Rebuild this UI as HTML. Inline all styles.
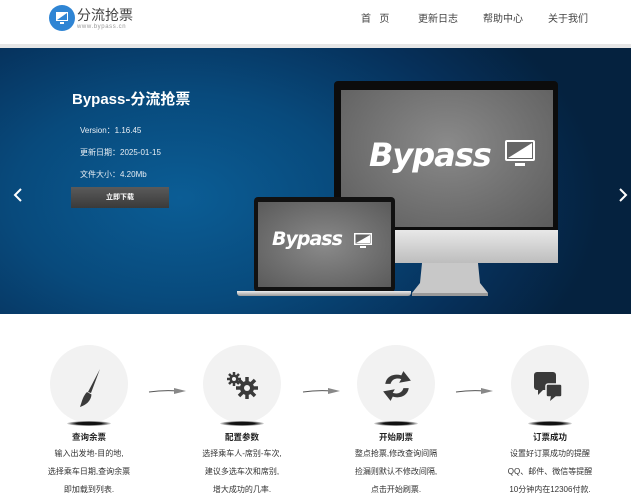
<!DOCTYPE html>
<html><head><meta charset="utf-8"><style>
*{margin:0;padding:0;box-sizing:border-box}
body{width:631px;height:500px;overflow:hidden;background:#fff;font-family:"Liberation Sans","Noto Sans CJK SC",sans-serif;position:relative}
.hdr{position:absolute;left:0;top:0;width:631px;height:44px;background:#fff}
.strip{position:absolute;left:0;top:44px;width:631px;height:5px;background:#e6e6e6}
.nav{position:absolute;top:10px;font-size:10px;color:#444}
.banner{position:absolute;left:0;top:48px;width:631px;height:266px;background:radial-gradient(ellipse 420px 260px at 180px 150px,#0b5d95 0%,#084a7c 40%,#06305a 75%,#05223f 100%)}
.abs{position:absolute}
.t{color:#e8eef4;font-size:8px}
.circ{position:absolute;width:78px;height:78px;border-radius:50%;background:#f2f2f2}
.sh{position:absolute;width:44px;height:5px;border-radius:50%;background:radial-gradient(ellipse,#111 40%,rgba(0,0,0,0) 75%)}
.ft{position:absolute;width:150px;text-align:center;font-size:8px;color:#333;line-height:18px}
.ft b{font-size:8.5px;color:#222;display:block;margin-bottom:-1px}
.arr{position:absolute;top:387px}
.bp{font-family:"DejaVu Sans",sans-serif;font-style:italic;font-weight:bold;color:#fff;letter-spacing:-1px}
</style></head><body>
<div class="hdr">
 <div class="abs" style="left:49px;top:5px;width:26px;height:26px;border-radius:50%;background:#2f85d4"></div>
 <svg class="abs" style="left:55px;top:11px" width="14" height="14" viewBox="0 0 14 14"><rect x="1" y="1" width="12" height="9" fill="#fff"/><path d="M2 9 L12 2 L12 9Z" fill="#2f85d4"/><rect x="5" y="11" width="4" height="2" fill="#fff"/></svg>
 <div class="abs" style="left:77px;top:5px;font-size:14px;color:#444">分流抢票</div>
 <div class="abs" style="left:77px;top:24px;font-size:6px;color:#999;letter-spacing:0.6px">www.bypass.cn</div>
 <div class="nav" style="left:361px">首&nbsp;&nbsp;&nbsp;页</div>
 <div class="nav" style="left:418px">更新日志</div>
 <div class="nav" style="left:483px">帮助中心</div>
 <div class="nav" style="left:548px">关于我们</div>
</div>
<div class="strip"></div>
<div class="banner"></div>
<div class="abs" style="left:72px;top:88px;color:#fff;font-weight:bold;font-size:15px">Bypass-分流抢票</div>
<div class="abs t" style="left:80px;top:125px">Version：1.16.45</div>
<div class="abs t" style="left:80px;top:147px">更新日期：2025-01-15</div>
<div class="abs t" style="left:80px;top:169px">文件大小：4.20Mb</div>
<div class="abs" style="left:71px;top:187px;width:98px;height:21px;background:linear-gradient(#5a5a5a,#3a3a3a);color:#fff;font-size:7px;font-weight:bold;text-align:center;line-height:21px">立即下载</div>
<svg class="abs" style="left:13px;top:187px" width="10" height="16"><path d="M8 2 L2 8 L8 14" stroke="#fff" stroke-width="2" fill="none"/></svg>
<svg class="abs" style="left:618px;top:187px" width="10" height="16"><path d="M2 2 L8 8 L2 14" stroke="#fff" stroke-width="2" fill="none"/></svg>
<div class="abs" style="left:334px;top:81px;width:224px;height:150px;background:#0c0c0c;border-radius:4px 4px 0 0"></div>
<div class="abs" style="left:341px;top:90px;width:212px;height:137px;background:radial-gradient(ellipse at 50% 40%,#8a8a8a,#5c5c5c)"></div>
<div class="abs" style="left:334px;top:230px;width:224px;height:33px;background:linear-gradient(#e8e8e8,#bdbdbd)"></div>
<svg class="abs" style="left:410px;top:263px" width="80" height="34"><path d="M12 0 L68 0 L70 20 L78 30 L78 33 L2 33 L2 30 L10 20Z" fill="#c8c8c8"/><path d="M2 30 L78 30 L78 33 L2 33Z" fill="#999"/></svg>
<div class="abs bp" style="left:369px;top:136px;font-size:32px">Bypass</div>
<svg class="abs" style="left:503px;top:138px" width="34" height="32"><rect x="2" y="2" width="30" height="21" fill="#fff" rx="2"/><rect x="4" y="4" width="26" height="17" fill="#666"/><path d="M5 20 L29 5 L29 20Z" fill="#fff"/><rect x="12" y="25" width="10" height="3" fill="#fff"/></svg>
<div class="abs" style="left:254px;top:197px;width:141px;height:95px;background:#111;border-radius:4px"></div>
<div class="abs" style="left:258px;top:202px;width:133px;height:85px;background:radial-gradient(ellipse,#8a8a8a,#5a5a5a)"></div>
<div class="abs" style="left:237px;top:291px;width:174px;height:5px;background:linear-gradient(#eee,#999);border-radius:0 0 3px 3px"></div>
<div class="abs bp" style="left:272px;top:228px;font-size:19px">Bypass</div>
<svg class="abs" style="left:353px;top:232px" width="20" height="18"><rect x="1" y="1" width="18" height="12" fill="#fff"/><rect x="2.5" y="2.5" width="15" height="9" fill="#666"/><path d="M3 11 L17 3 L17 11Z" fill="#fff"/><rect x="7" y="14" width="6" height="2" fill="#fff"/></svg>
<div class="circ" style="left:50px;top:345px"></div>
<div class="circ" style="left:203px;top:345px"></div>
<div class="circ" style="left:357px;top:345px"></div>
<div class="circ" style="left:511px;top:345px"></div>
<div class="sh" style="left:67px;top:421px"></div>
<div class="sh" style="left:220px;top:421px"></div>
<div class="sh" style="left:374px;top:421px"></div>
<div class="sh" style="left:528px;top:421px"></div>
<svg class="abs" style="left:78px;top:368px" width="24" height="40"><path d="M22 1 L13 25 L10 24 Z" fill="#3a3a3a"/><path d="M9 24 L13.5 26.5 C13 33 8 37 2 39 C4 33 5 28 9 24Z" fill="#3a3a3a"/></svg>
<svg class="abs" style="left:225px;top:370px" width="36" height="32" viewBox="0 0 36 32"><g fill="#3a3a3a"><circle cx="22" cy="18" r="7"/><g stroke="#3a3a3a" stroke-width="3.5"><path d="M22 7 V29 M11 18 H33 M14 10 L30 26 M30 10 L14 26"/></g><circle cx="9" cy="9" r="4.5"/><g stroke="#3a3a3a" stroke-width="2.5"><path d="M9 2 V16 M2 9 H16 M4 4 L14 14 M14 4 L4 14"/></g></g><circle cx="22" cy="18" r="3" fill="#f2f2f2"/><circle cx="9" cy="9" r="2" fill="#f2f2f2"/></svg>
<svg class="abs" style="left:382px;top:370px" width="30" height="32" viewBox="0 0 28 30"><path d="M3 13 C4 6 11 3 18 5 L20 1 L27 10 L16 12 L18 8.5 C13 7 9 9 8 13Z" fill="#3a3a3a"/><path d="M25 17 C24 24 17 27 10 25 L8 29 L1 20 L12 18 L10 21.5 C15 23 19 21 20 17Z" fill="#3a3a3a"/></svg>
<svg class="abs" style="left:532px;top:370px" width="34" height="34"><rect x="2" y="2" width="22" height="18" rx="3" fill="#3a3a3a"/><path d="M6 19 L6 25 L12 19Z" fill="#3a3a3a"/><rect x="14" y="14" width="16" height="13" rx="2" fill="#3a3a3a" stroke="#f2f2f2" stroke-width="1.5"/><path d="M19 26 L18 31 L24 26Z" fill="#3a3a3a"/></svg>
<svg class="arr" style="left:148px" width="40" height="8"><path d="M1 5 Q15 3 30 4" stroke="#555" fill="none"/><path d="M26 1 L38 4 L26 7Z" fill="#888"/></svg>
<svg class="arr" style="left:302px" width="40" height="8"><path d="M1 5 Q15 3 30 4" stroke="#555" fill="none"/><path d="M26 1 L38 4 L26 7Z" fill="#888"/></svg>
<svg class="arr" style="left:455px" width="40" height="8"><path d="M1 5 Q15 3 30 4" stroke="#555" fill="none"/><path d="M26 1 L38 4 L26 7Z" fill="#888"/></svg>
<div class="ft" style="left:14px;top:428px"><b>查询余票</b>输入出发地-目的地,<br>选择乘车日期,查询余票<br>即加载到列表.</div>
<div class="ft" style="left:167px;top:428px"><b>配置参数</b>选择乘车人-席别-车次,<br>建议多选车次和席别,<br>增大成功的几率.</div>
<div class="ft" style="left:321px;top:428px"><b>开始刷票</b>整点抢票,修改查询间隔<br>捡漏则默认不修改间隔,<br>点击开始刷票.</div>
<div class="ft" style="left:475px;top:428px"><b>订票成功</b>设置好订票成功的提醒<br>QQ、邮件、微信等提醒<br>10分钟内在12306付款.</div>
</body></html>
